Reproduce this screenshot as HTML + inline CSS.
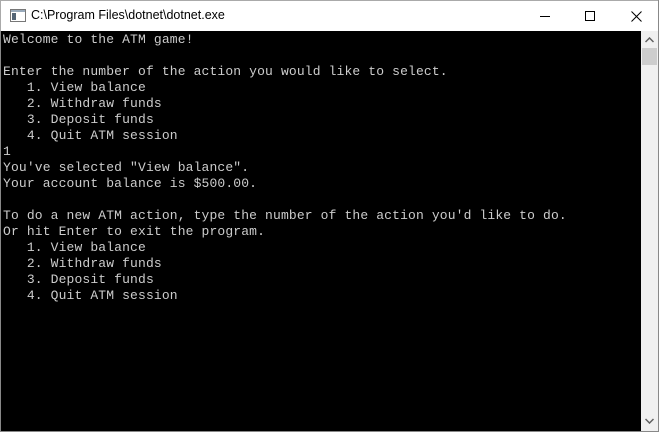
<!DOCTYPE html>
<html><head><style>
body{margin:0;width:659px;height:432px;overflow:hidden;background:#fff;position:relative;font-family:"Liberation Sans",sans-serif}
.tb{position:absolute;left:0;top:0;width:659px;height:31px;background:#fff;border:1px solid #aaa;border-bottom:none;box-sizing:border-box}
.title{position:absolute;left:30px;top:7px;font-size:12.5px;color:#000}
.con{position:absolute;left:0;top:31px;width:641px;height:400px;background:#000;border-left:1px solid #888;box-sizing:border-box}
pre{margin:0;position:absolute;left:2px;top:1px;font-family:"Liberation Mono",monospace;font-size:13px;letter-spacing:0.14px;line-height:16px;color:#ccc}
.sb{position:absolute;left:641px;top:31px;width:17px;height:400px;background:#f0f0f0}
.rb{position:absolute;left:658px;top:0;width:1px;height:432px;background:#888}
.bb{position:absolute;left:0;top:431px;width:659px;height:1px;background:#888}
</style></head><body>
<div class="tb">
<svg style="position:absolute;left:9px;top:8px" width="16" height="14"><rect x="0.5" y="0.5" width="15" height="12" fill="#fff" stroke="#777"/><rect x="1" y="1" width="14" height="2" fill="#9ab"/><rect x="2" y="4" width="4" height="7" fill="#567"/></svg>
<div class="title">C:\Program Files\dotnet\dotnet.exe</div>
<svg style="position:absolute;left:530px;top:5px" width="120" height="20"><line x1="9" y1="10.5" x2="19" y2="10.5" stroke="#000"/><rect x="54.5" y="5.5" width="9" height="9" fill="none" stroke="#000"/><path d="M100.5 5.5 L110.5 15.5 M110.5 5.5 L100.5 15.5" stroke="#000" fill="none"/></svg>
</div>
<div class="con"><pre>Welcome to the ATM game!

Enter the number of the action you would like to select.
   1. View balance
   2. Withdraw funds
   3. Deposit funds
   4. Quit ATM session
1
You've selected "View balance".
Your account balance is $500.00.

To do a new ATM action, type the number of the action you'd like to do.
Or hit Enter to exit the program.
   1. View balance
   2. Withdraw funds
   3. Deposit funds
   4. Quit ATM session</pre></div>
<div class="sb">
<svg style="position:absolute;left:4px;top:6px" width="9" height="6"><path d="M0.5 5 L4.5 1 L8.5 5" stroke="#606060" stroke-width="1.5" fill="none"/></svg>
<div style="position:absolute;left:1px;top:17px;width:15px;height:17px;background:#cdcdcd"></div>
<svg style="position:absolute;left:4px;top:387px" width="9" height="6"><path d="M0.5 1 L4.5 5 L8.5 1" stroke="#606060" stroke-width="1.5" fill="none"/></svg>
</div>
<div class="rb"></div><div class="bb"></div>
</body></html>
